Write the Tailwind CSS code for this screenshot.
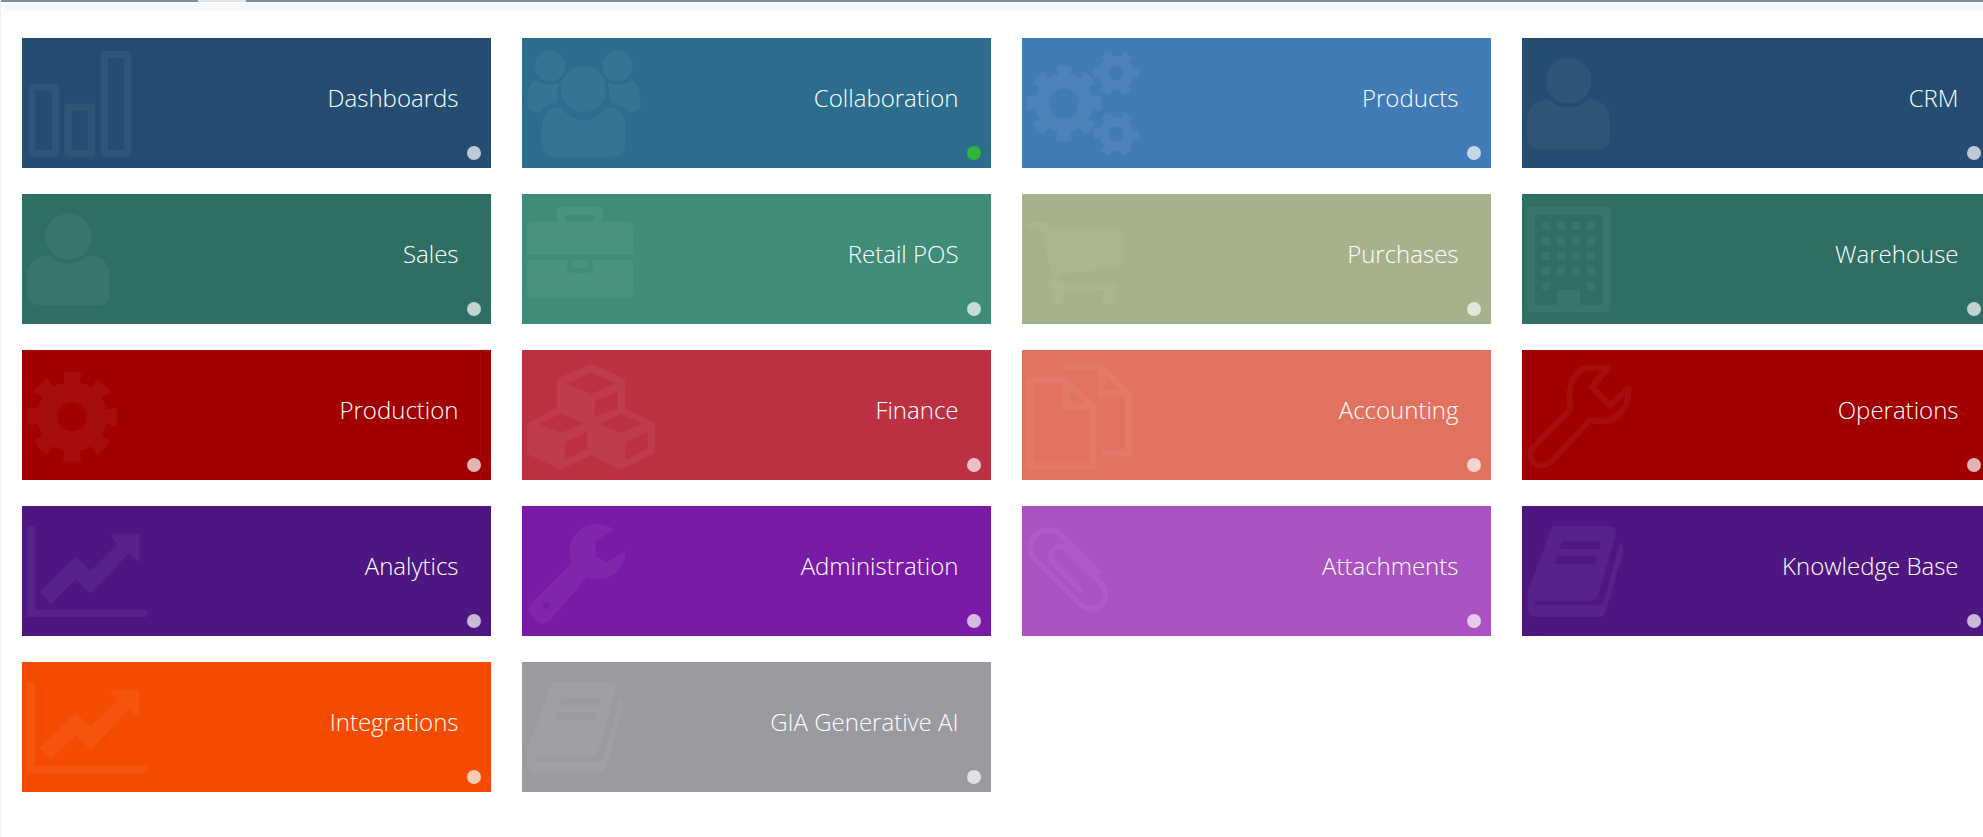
<!DOCTYPE html>
<html lang="en">
<head>
<meta charset="utf-8">
<title>Modules</title>
<script src="https://cdn.jsdelivr.net/npm/@tailwindcss/browser@4"></script>
</head>
<body class="h-[837px] w-[1983px] overflow-hidden bg-white font-['Open_Sans',sans-serif]">
<div class="relative h-[837px] overflow-hidden border-l border-[#eef3f8]">
  <div class="flex h-[2px] bg-[#7f8b98]">
    <div class="ml-[197px] h-full w-[48px] bg-[#dfe4ee]"></div>
  </div>
  <div class="ml-[5px] mt-[1px] h-[8px] bg-[#f7f7f7]"></div>
  <div class="ml-[21px] mt-[27px] grid w-[2000px] grid-cols-[repeat(4,468.5px)] gap-x-[31.5px] gap-y-[26px]">

    <a class="relative flex h-[130px] justify-end bg-[#254c71] pr-8 pt-[43px] text-white">
      <svg class="absolute left-0 top-0 h-[130px] w-[160px] fill-white opacity-[.05]" viewBox="0 0 480 390"><path fill-rule="evenodd" d="M30 138H100Q110 138 110 148V346Q110 356 100 356H30Q20 356 20 346V148Q20 138 30 138ZM40 158V336H90V158ZM137 197H209Q219 197 219 207V346Q219 356 209 356H137Q127 356 127 346V207Q127 197 137 197ZM149 218V336H197V218ZM247 39H316Q326 39 326 49V346Q326 356 316 356H247Q237 356 237 346V49Q237 39 247 39ZM258 60V336H307V60Z"/></svg>
      <span class="text-[24px] leading-[34px] font-light">Dashboards</span>
      <span class="absolute bottom-[8px] right-[10px] size-[14px] rounded-full bg-white/70"></span>
    </a>

    <a class="relative flex h-[130px] justify-end bg-[#2c6d8d] pr-8 pt-[43px] text-white">
      <svg class="absolute left-0 top-0 h-[130px] w-[160px] fill-white opacity-[.05]" viewBox="0 0 480 390"><circle cx="185" cy="153" r="69"/><path d="M61 310V262C61 225 85 208 118 208A78 78 0 0 0 252 208C286 208 310 225 310 262V310Q310 356 270 356H101Q61 356 61 310Z"/><circle cx="84" cy="84" r="46"/><circle cx="286" cy="84" r="46"/><path d="M15 195C15 150 25 129 45 129Q75 148 113 133A78 78 0 0 0 108 170Q108 188 100 196Q68 200 55 221H42Q15 221 15 195Z"/><path transform="translate(370) scale(-1 1)" d="M15 195C15 150 25 129 45 129Q75 148 113 133A78 78 0 0 0 108 170Q108 188 100 196Q68 200 55 221H42Q15 221 15 195Z"/></svg>
      <span class="text-[24px] leading-[34px] font-light">Collaboration</span>
      <span class="absolute bottom-[8px] right-[10px] size-[14px] rounded-full bg-[#2fb53a]"></span>
    </a>

    <a class="relative flex h-[130px] justify-end bg-[#417bb5] pr-8 pt-[43px] text-white">
      <svg class="absolute left-0 top-0 h-[130px] w-[160px] stroke-white opacity-[.05]" fill="none" viewBox="0 0 480 390"><circle cx="126" cy="196" r="66.5" stroke-width="43"/><circle cx="126" cy="196" r="100" stroke-width="26" stroke-dasharray="42 36.54" stroke-dashoffset="21"/><circle cx="283" cy="106" r="37" stroke-width="30"/><circle cx="283" cy="106" r="60" stroke-width="16" stroke-dasharray="30 32.83" stroke-dashoffset="15"/><circle cx="283" cy="288" r="37" stroke-width="30"/><circle cx="283" cy="288" r="60" stroke-width="16" stroke-dasharray="30 32.83" stroke-dashoffset="15"/></svg>
      <span class="text-[24px] leading-[34px] font-light">Products</span>
      <span class="absolute bottom-[8px] right-[10px] size-[14px] rounded-full bg-white/70"></span>
    </a>

    <a class="relative flex h-[130px] justify-end bg-[#254c71] pr-8 pt-[43px] text-white">
      <svg class="absolute left-0 top-0 h-[130px] w-[160px] fill-white opacity-[.05]" viewBox="0 0 480 390"><circle cx="139" cy="128" r="69"/><path d="M15 294V250C15 210 40 184 80 184A82 82 0 0 0 198 184C240 184 264 210 264 250V294Q264 334 224 334H55Q15 334 15 294Z"/></svg>
      <span class="text-[24px] leading-[34px] font-light">CRM</span>
      <span class="absolute bottom-[8px] right-[10px] size-[14px] rounded-full bg-white/70"></span>
    </a>

    <a class="relative flex h-[130px] justify-end bg-[#2f6e63] pr-8 pt-[43px] text-white">
      <svg class="absolute left-0 top-0 h-[130px] w-[160px] fill-white opacity-[.05]" viewBox="0 0 480 390"><circle cx="139" cy="128" r="69"/><path d="M15 294V250C15 210 40 184 80 184A82 82 0 0 0 198 184C240 184 264 210 264 250V294Q264 334 224 334H55Q15 334 15 294Z"/></svg>
      <span class="text-[24px] leading-[34px] font-light">Sales</span>
      <span class="absolute bottom-[8px] right-[10px] size-[14px] rounded-full bg-white/70"></span>
    </a>

    <a class="relative flex h-[130px] justify-end bg-[#3f8c78] pr-8 pt-[43px] text-white">
      <svg class="absolute left-0 top-0 h-[130px] w-[160px] fill-white opacity-[.05]" viewBox="0 0 480 390"><path fill-rule="evenodd" d="M15 182V104Q15 84 35 84H105V58Q105 38 125 38H222Q242 38 242 58V84H313Q333 84 333 104V182ZM129 64V84H218V64Z"/><path d="M15 197H135V226Q135 236 145 236H202Q212 236 212 226V197H333V291Q333 311 313 311H35Q15 311 15 291Z"/><rect x="149" y="197" width="49" height="25"/></svg>
      <span class="text-[24px] leading-[34px] font-light">Retail POS</span>
      <span class="absolute bottom-[8px] right-[10px] size-[14px] rounded-full bg-white/70"></span>
    </a>

    <a class="relative flex h-[130px] justify-end bg-[#a6b28b] pr-8 pt-[43px] text-white">
      <svg class="absolute left-0 top-0 h-[130px] w-[160px] fill-white opacity-[.05]" viewBox="0 0 480 390"><path d="M13 95Q13 84 24 84H70Q80 84 82 95L83 107H297Q307 107 307 117V207Q307 217 297 218L113 243V267H275Q285 267 285 278Q285 290 275 290H90Q80 290 80 280Q80 268 90 260V250L60 107H24Q13 107 13 95Z"/><circle cx="104" cy="310" r="22"/><circle cx="260" cy="310" r="22"/></svg>
      <span class="text-[24px] leading-[34px] font-light">Purchases</span>
      <span class="absolute bottom-[8px] right-[10px] size-[14px] rounded-full bg-white/70"></span>
    </a>

    <a class="relative flex h-[130px] justify-end bg-[#2f6e63] pr-8 pt-[43px] text-white">
      <svg class="absolute left-0 top-0 h-[130px] w-[160px] fill-white opacity-[.05]" viewBox="0 0 480 390"><path fill-rule="evenodd" d="M25 38H253Q263 38 263 48V345Q263 355 253 355H25Q15 355 15 345V48Q15 38 25 38ZM39 62V332H239V62Z"/><path d="M105 287H174V332H105Z"/><path d="M60 84h24v24H60zM105 84h24v24h-24zM150 84h24v24h-24zM195 84h24v24h-24zM60 129h24v24H60zM105 129h24v24h-24zM150 129h24v24h-24zM195 129h24v24h-24zM60 174h24v24H60zM105 174h24v24h-24zM150 174h24v24h-24zM195 174h24v24h-24zM60 219h24v24H60zM105 219h24v24h-24zM150 219h24v24h-24zM195 219h24v24h-24zM60 265h24v24H60zM195 265h24v24h-24z"/></svg>
      <span class="text-[24px] leading-[34px] font-light">Warehouse</span>
      <span class="absolute bottom-[8px] right-[10px] size-[14px] rounded-full bg-white/70"></span>
    </a>

    <a class="relative flex h-[130px] justify-end bg-[#a00000] pr-8 pt-[43px] text-white">
      <svg class="absolute left-0 top-0 h-[130px] w-[160px] stroke-white opacity-[.05]" fill="none" viewBox="0 0 480 390"><circle cx="150" cy="200" r="74.5" stroke-width="61"/><circle cx="150" cy="200" r="120" stroke-width="32" stroke-dasharray="50 44.25" stroke-dashoffset="25"/></svg>
      <span class="text-[24px] leading-[34px] font-light">Production</span>
      <span class="absolute bottom-[8px] right-[10px] size-[14px] rounded-full bg-white/70"></span>
    </a>

    <a class="relative flex h-[130px] justify-end bg-[#bc3044] pr-8 pt-[43px] text-white">
      <svg class="absolute left-0 top-0 h-[130px] w-[160px] fill-white opacity-[.05]" viewBox="0 0 480 390"><path fill-rule="evenodd" d="M207 41L310 86V175L399 221V310L297 359L207 316L117 359L15 311V221L105 175V86ZM133 101L207 131L283 101L207 68ZM218 154V199L287 176V124ZM50 221L117 249L185 221L117 191ZM230 221L297 249L365 221L297 191ZM128 276V329L196 296V246ZM310 276V329L377 296V246Z"/></svg>
      <span class="text-[24px] leading-[34px] font-light">Finance</span>
      <span class="absolute bottom-[8px] right-[10px] size-[14px] rounded-full bg-white/70"></span>
    </a>

    <a class="relative flex h-[130px] justify-end bg-[#e17260] pr-8 pt-[43px] text-white">
      <svg class="absolute left-0 top-0 h-[130px] w-[160px] stroke-white opacity-[.05]" fill="none" stroke-width="20" stroke-linejoin="round" viewBox="0 0 480 390"><path d="M133 91H23V349H213V170L133 91V170H213"/><path d="M123 51H238L319 131V310H240M238 51V131H319"/></svg>
      <span class="text-[24px] leading-[34px] font-light">Accounting</span>
      <span class="absolute bottom-[8px] right-[10px] size-[14px] rounded-full bg-white/70"></span>
    </a>

    <a class="relative flex h-[130px] justify-end bg-[#a00000] pr-8 pt-[43px] text-white">
      <svg class="absolute left-0 top-0 h-[130px] w-[160px] stroke-white opacity-[.05]" fill="none" stroke-width="18" stroke-linejoin="round" viewBox="0 0 480 390"><path d="M33 291L146 178C134 121 149 61 199 53H259L209 111L264 166L319 116C324 181 274 230 203 210L93 330C70 353 40 350 28 328C22 312 24 300 33 291Z"/></svg>
      <span class="text-[24px] leading-[34px] font-light">Operations</span>
      <span class="absolute bottom-[8px] right-[10px] size-[14px] rounded-full bg-white/70"></span>
    </a>

    <a class="relative flex h-[130px] justify-end bg-[#4d1681] pr-8 pt-[43px] text-white">
      <svg class="absolute left-0 top-0 h-[130px] w-[160px] fill-white opacity-[.05]" viewBox="0 0 480 390"><path d="M15 61H39V311H376V333H15Z"/><path d="M54 258L161 153L206 194L286 114L264 83H352V171L322 141L206 263L161 219L87 293Z"/></svg>
      <span class="text-[24px] leading-[34px] font-light">Analytics</span>
      <span class="absolute bottom-[8px] right-[10px] size-[14px] rounded-full bg-white/70"></span>
    </a>

    <a class="relative flex h-[130px] justify-end bg-[#7a1ba8] pr-8 pt-[43px] text-white">
      <svg class="absolute left-0 top-0 h-[130px] w-[160px] fill-white opacity-[.05]" viewBox="0 0 480 390"><path fill-rule="evenodd" d="M275 71L220 106V151L255 169L310 136A82 82 0 0 1 195 213L82 345Q60 362 38 340L27 328Q12 308 28 292L150 170A82 82 0 0 1 275 71ZM73 289A10 10 0 1 0 73 309A10 10 0 1 0 73 289Z"/></svg>
      <span class="text-[24px] leading-[34px] font-light">Administration</span>
      <span class="absolute bottom-[8px] right-[10px] size-[14px] rounded-full bg-white/70"></span>
    </a>

    <a class="relative flex h-[130px] justify-end bg-[#ab52c2] pr-8 pt-[43px] text-white">
      <svg class="absolute left-0 top-0 h-[130px] w-[160px] stroke-white opacity-[.05]" fill="none" stroke-width="17" stroke-linecap="round" viewBox="0 0 480 390"><path d="M230 200L118 88C85 55 25 75 25 125C25 145 35 155 45 165L175 295C205 325 255 300 250 265C250 250 243 240 235 232L128 125C105 110 75 140 90 165L175 250"/></svg>
      <span class="text-[24px] leading-[34px] font-light">Attachments</span>
      <span class="absolute bottom-[8px] right-[10px] size-[14px] rounded-full bg-white/70"></span>
    </a>

    <a class="relative flex h-[130px] justify-end bg-[#4d1681] pr-8 pt-[43px] text-white">
      <svg class="absolute left-0 top-0 h-[130px] w-[160px] fill-white opacity-[.05]" viewBox="0 0 480 390"><path fill-rule="evenodd" d="M98 61H265Q286 61 281 83L231 262Q224 282 205 284H50Q36 284 38 291Q40 298 52 298H225Q240 298 245 285L294 112Q303 118 304 135L252 316Q246 333 228 333H45Q16 333 16 305V265Q16 260 20 250L80 90Q85 61 98 61ZM119 106L114 129H232L237 106ZM104 151L99 174H219L224 151Z"/></svg>
      <span class="text-[24px] leading-[34px] font-light">Knowledge Base</span>
      <span class="absolute bottom-[8px] right-[10px] size-[14px] rounded-full bg-white/70"></span>
    </a>

    <a class="relative flex h-[130px] justify-end bg-[#f44b00] pr-8 pt-[43px] text-white">
      <svg class="absolute left-0 top-0 h-[130px] w-[160px] fill-white opacity-[.05]" viewBox="0 0 480 390"><path d="M15 61H39V311H376V333H15Z"/><path d="M54 258L161 153L206 194L286 114L264 83H352V171L322 141L206 263L161 219L87 293Z"/></svg>
      <span class="text-[24px] leading-[34px] font-light">Integrations</span>
      <span class="absolute bottom-[8px] right-[10px] size-[14px] rounded-full bg-white/70"></span>
    </a>

    <a class="relative flex h-[130px] justify-end bg-[#9a9a9f] pr-8 pt-[43px] text-white">
      <svg class="absolute left-0 top-0 h-[130px] w-[160px] fill-white opacity-[.05]" viewBox="0 0 480 390"><path fill-rule="evenodd" d="M98 61H265Q286 61 281 83L231 262Q224 282 205 284H50Q36 284 38 291Q40 298 52 298H225Q240 298 245 285L294 112Q303 118 304 135L252 316Q246 333 228 333H45Q16 333 16 305V265Q16 260 20 250L80 90Q85 61 98 61ZM119 106L114 129H232L237 106ZM104 151L99 174H219L224 151Z"/></svg>
      <span class="text-[24px] leading-[34px] font-light">GIA Generative AI</span>
      <span class="absolute bottom-[8px] right-[10px] size-[14px] rounded-full bg-white/70"></span>
    </a>
  </div>
</div>
</body>
</html>
